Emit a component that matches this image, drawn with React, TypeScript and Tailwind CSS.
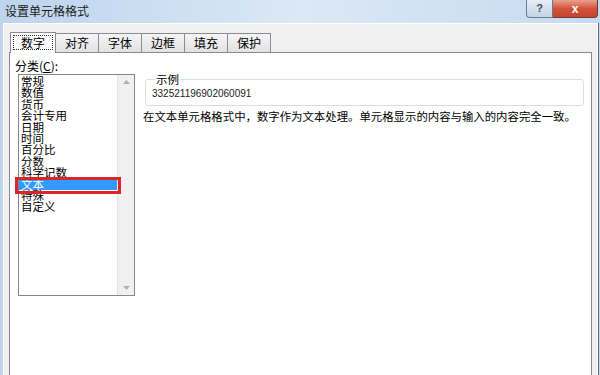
import React from 'react';

const tabs = ['数字', '对齐', '字体', '边框', '填充', '保护'];

const categories = [
  '常规',
  '数值',
  '货币',
  '会计专用',
  '日期',
  '时间',
  '百分比',
  '分数',
  '科学记数',
  '文本',
  '特殊',
  '自定义',
];

const TitleButtons: React.FC = () => (
  <div className="flex mr-[2px]">
    <div className="w-[27px] h-[18px] rounded-bl-[4px] border border-t-0 border-[#6b7a8c] bg-gradient-to-b from-[#e6eef8] to-[#c3d3e6] flex items-center justify-center text-[11px] font-bold text-[#3d4b5c] font-['Liberation_Sans',sans-serif]">
      ?
    </div>
    <div className="w-[45px] h-[18px] rounded-br-[4px] border border-t-0 border-l-0 border-[#6b3a33] bg-gradient-to-b from-[#e8a08f] via-[#d2523b] to-[#c4442c] flex items-center justify-center text-[12px] font-bold text-white font-['Liberation_Sans',sans-serif]">
      x
    </div>
  </div>
);

const CategoryList: React.FC = () => (
  <div className="relative mt-[2px] ml-[3px] w-[117px] h-[222px] border border-[#828790] bg-white flex">
    <div className="flex-1 pt-[1px] text-[11.5px] leading-[11.4px]">
      {categories.map((c) => (
        <div
          key={c}
          className={
            c === '文本'
              ? 'h-[11.4px] pl-[2px] bg-[#3399ff] text-white'
              : 'h-[11.4px] pl-[2px] text-black'
          }
        >
          {c}
        </div>
      ))}
    </div>
    <div className="w-[17px] bg-[#f0f0f0] border-l border-[#e4e4e4] flex flex-col justify-between items-center py-[5px]">
      <svg width="7" height="4" viewBox="0 0 7 4">
        <path d="M0 4 L3.5 0 L7 4 Z" fill="#b0b0b0" />
      </svg>
      <svg width="7" height="4" viewBox="0 0 7 4">
        <path d="M0 0 L3.5 4 L7 0 Z" fill="#b0b0b0" />
      </svg>
    </div>
    <div className="absolute left-[-4px] top-[102px] w-[106px] h-[17px] border-[3px] border-[#d9262b]" />
  </div>
);

export default function App() {
  return (
    <div className="w-[600px] h-[375px] overflow-hidden flex flex-col bg-gradient-to-r from-[#bcd4ed] via-[#dbe8f6] to-[#c6daef] font-['Noto_Sans_CJK_SC',sans-serif] text-black">
      <div className="h-[23px] shrink-0 flex justify-between items-start">
        <span className="pl-[5px] pt-[3px] text-[12px] leading-[16px] text-[#1b1b1b]">设置单元格格式</span>
        <TitleButtons />
      </div>

      <div className="flex-1 flex pl-[3px] pr-[1px]">
        <div className="flex-1 flex flex-col bg-[#f0f0f0] border-l border-t border-r border-[#ffffff] pl-[5px] pr-[5px] pt-[7px]">
          <div className="flex items-end h-[21px] pl-[1px]">
            {tabs.map((t, i) =>
              i === 0 ? (
                <div
                  key={t}
                  className="relative z-10 w-[46px] h-[21px] -mb-[1px] bg-white border border-b-0 border-[#898c95] flex items-start justify-center pt-[2px]"
                >
                  <span className="w-[40px] h-[15px] border border-dotted border-[#333] flex items-center justify-center text-[12px] leading-[12px]">
                    {t}
                  </span>
                </div>
              ) : (
                <div
                  key={t}
                  className="w-[44px] h-[19px] -ml-[1px] bg-gradient-to-b from-[#f5f5f5] to-[#e2e2e2] border border-b-0 border-[#898c95] flex items-center justify-center text-[12px] leading-[12px]"
                >
                  {t}
                </div>
              )
            )}
          </div>

          <div className="flex-1 bg-white border border-b-0 border-[#898c95] flex pl-[5px] pt-[6px]">
            <div className="flex flex-col">
              <span className="text-[12px] leading-[13px]">
                分类(<span className="underline">C</span>):
              </span>
              <CategoryList />
            </div>

            <div className="ml-[10px] w-[439px] flex flex-col pt-[14px]">
              <fieldset className="border border-[#d5dfe5] rounded-[3px] h-[33px] pl-[6px]">
                <legend className="ml-[3px] px-[1px] text-[11.5px] leading-[12px]">示例</legend>
                <div className="pt-[3px] text-[10px] leading-[12px] font-['Liberation_Sans',sans-serif] text-[#222]">
                  332521196902060091
                </div>
              </fieldset>
              <p className="mt-[3px] -ml-[2px] text-[11.4px] leading-[14px] whitespace-nowrap">
                在文本单元格格式中，数字作为文本处理。单元格显示的内容与输入的内容完全一致。
              </p>
            </div>
          </div>
        </div>
        <div className="w-[1px] bg-[#5f6b7c]" />
      </div>
    </div>
  );
}
